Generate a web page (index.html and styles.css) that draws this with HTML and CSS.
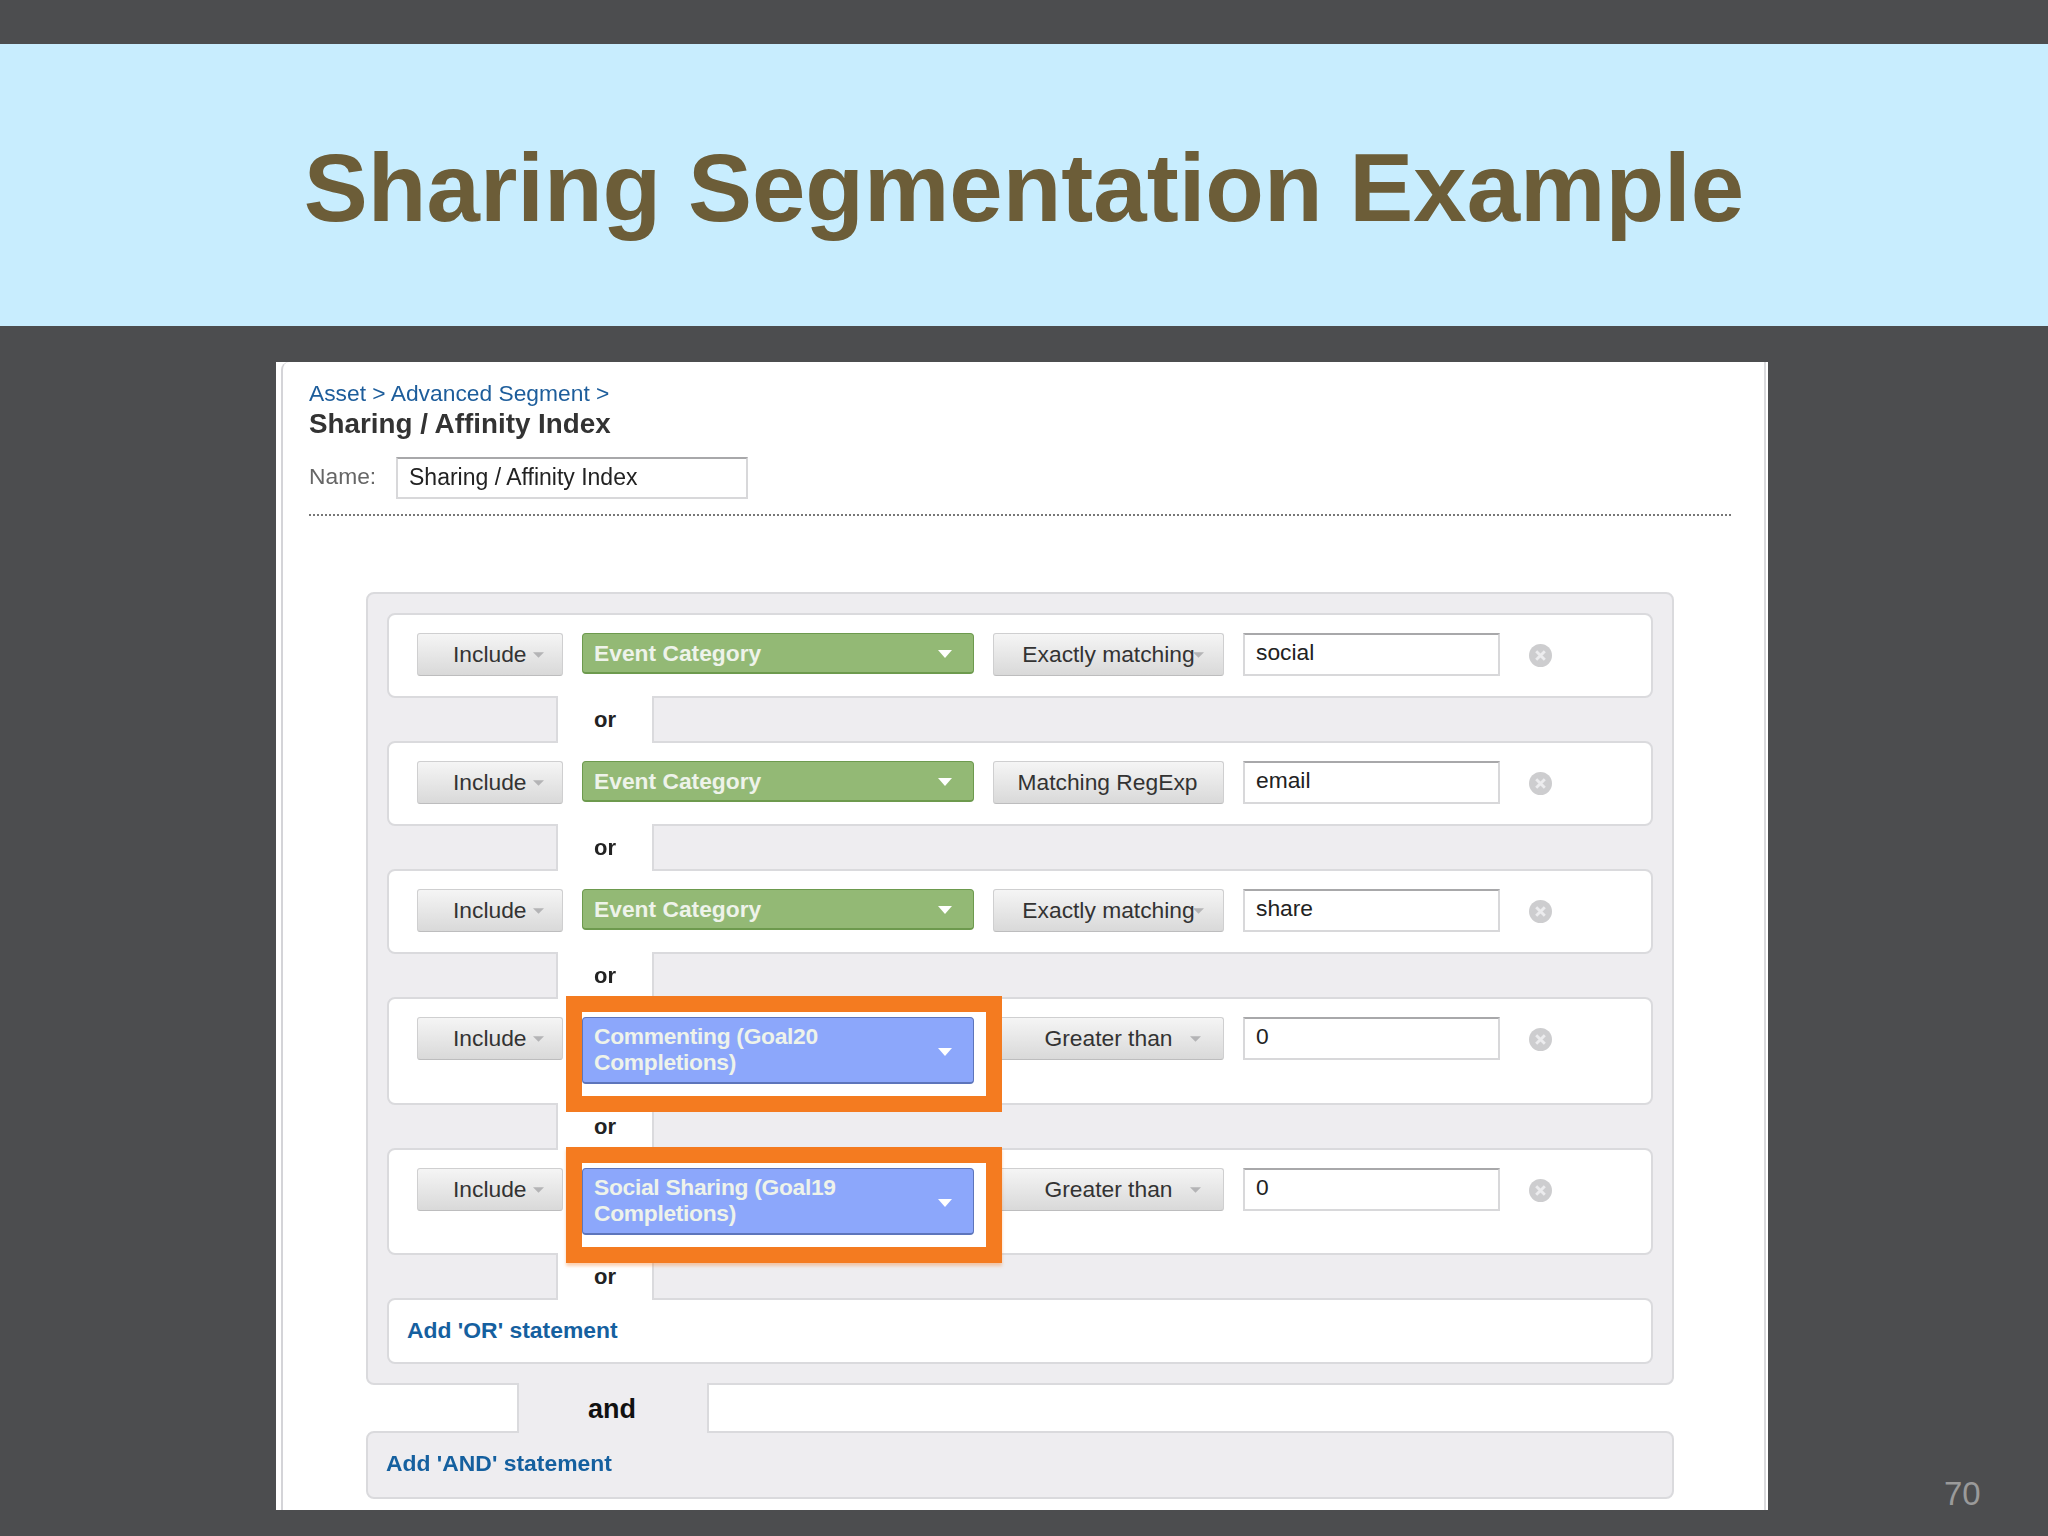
FILE: index.html
```html
<!DOCTYPE html>
<html lang="en">
<head>
<meta charset="utf-8">
<title>Sharing Segmentation Example</title>
<link rel="stylesheet" href="styles.css">
</head>
<body>
<main class="slide">
  <header class="band"><h1 class="slide-title">Sharing Segmentation Example</h1></header>
  <section class="shot">
    <div class="frame">
      <div class="crumbs">Asset &gt; Advanced Segment &gt;</div>
      <h2 class="seg-title">Sharing / Affinity Index</h2>
      <div class="name-row"><span class="name-label">Name:</span><div class="field name-field">Sharing / Affinity Index</div></div>
      <div class="divider"></div>

      <div class="panel">
        <div class="row">
          <div class="btn include">Include<svg class="caret" viewBox="0 0 12 6"><path d="M0 0h12L6 6z"/></svg></div>
          <div class="dim green">Event Category<svg class="dim-caret" viewBox="0 0 14 8"><path d="M0 0h14L7 8z"/></svg></div>
          <div class="btn match exact">Exactly matching<svg class="caret" viewBox="0 0 12 6"><path d="M0 0h12L6 6z"/></svg></div>
          <div class="field val">social</div>
          <svg class="remove" viewBox="0 0 24 24"><circle cx="12" cy="12" r="12"/><path d="M7.5 7.5l9 9M16.5 7.5l-9 9"/></svg>
        </div>
        <div class="link"><div class="tab">or</div></div>
        <div class="row">
          <div class="btn include">Include<svg class="caret" viewBox="0 0 12 6"><path d="M0 0h12L6 6z"/></svg></div>
          <div class="dim green">Event Category<svg class="dim-caret" viewBox="0 0 14 8"><path d="M0 0h14L7 8z"/></svg></div>
          <div class="btn match regexp">Matching RegExp</div>
          <div class="field val">email</div>
          <svg class="remove" viewBox="0 0 24 24"><circle cx="12" cy="12" r="12"/><path d="M7.5 7.5l9 9M16.5 7.5l-9 9"/></svg>
        </div>
        <div class="link"><div class="tab">or</div></div>
        <div class="row">
          <div class="btn include">Include<svg class="caret" viewBox="0 0 12 6"><path d="M0 0h12L6 6z"/></svg></div>
          <div class="dim green">Event Category<svg class="dim-caret" viewBox="0 0 14 8"><path d="M0 0h14L7 8z"/></svg></div>
          <div class="btn match exact">Exactly matching<svg class="caret" viewBox="0 0 12 6"><path d="M0 0h12L6 6z"/></svg></div>
          <div class="field val">share</div>
          <svg class="remove" viewBox="0 0 24 24"><circle cx="12" cy="12" r="12"/><path d="M7.5 7.5l9 9M16.5 7.5l-9 9"/></svg>
        </div>
        <div class="link"><div class="tab">or</div></div>
        <div class="row tall">
          <div class="btn include">Include<svg class="caret" viewBox="0 0 12 6"><path d="M0 0h12L6 6z"/></svg></div>
          <div class="dim blue"><span class="dim-text">Commenting (Goal20<br>Completions)</span><svg class="dim-caret" viewBox="0 0 14 8"><path d="M0 0h14L7 8z"/></svg></div>
          <div class="btn match greater">Greater than<svg class="caret" viewBox="0 0 12 6"><path d="M0 0h12L6 6z"/></svg></div>
          <div class="field val">0</div>
          <svg class="remove" viewBox="0 0 24 24"><circle cx="12" cy="12" r="12"/><path d="M7.5 7.5l9 9M16.5 7.5l-9 9"/></svg>
          <div class="mark"></div>
        </div>
        <div class="link"><div class="tab">or</div></div>
        <div class="row tall">
          <div class="btn include">Include<svg class="caret" viewBox="0 0 12 6"><path d="M0 0h12L6 6z"/></svg></div>
          <div class="dim blue"><span class="dim-text">Social Sharing (Goal19<br>Completions)</span><svg class="dim-caret" viewBox="0 0 14 8"><path d="M0 0h14L7 8z"/></svg></div>
          <div class="btn match greater">Greater than<svg class="caret" viewBox="0 0 12 6"><path d="M0 0h12L6 6z"/></svg></div>
          <div class="field val">0</div>
          <svg class="remove" viewBox="0 0 24 24"><circle cx="12" cy="12" r="12"/><path d="M7.5 7.5l9 9M16.5 7.5l-9 9"/></svg>
          <div class="mark mark-soft"></div>
        </div>
        <div class="link"><div class="tab">or</div></div>
        <div class="row add-or"><span class="add">Add 'OR' statement</span></div>
      </div>

      <div class="and-link"><div class="and-tab">and</div></div>
      <div class="add-and"><span class="add">Add 'AND' statement</span></div>
    </div>
  </section>
  <div class="page-no">70</div>
</main>
</body>
</html>
```

FILE: styles.css
```css
* { box-sizing: border-box; }
html, body { margin: 0; padding: 0; }
body {
  width: 2048px;
  height: 1536px;
  overflow: hidden;
  background: #4c4d4f;
  font-family: "Liberation Sans", Arial, sans-serif;
}
.slide { position: relative; width: 2048px; height: 1536px; padding-top: 44px; }
.band {
  height: 282px;
  background: #c8edfe;
  display: flex;
  align-items: center;
  justify-content: center;
}
.slide-title {
  margin: 0;
  font-size: 96px;
  line-height: 110px;
  font-weight: 700;
  color: #6c5d38;
  padding-top: 6px;
}
.shot {
  width: 1492px;
  height: 1148px;
  margin: 36px 0 0 276px;
  background: #fff;
  overflow: hidden;
}
.frame {
  width: 1485px;
  height: 1160px;
  margin-left: 5px;
  padding: 20px 0 0 26px;
  border-left: 2px solid #d4d4d8;
  border-right: 2px solid #dadadd;
  border-top-left-radius: 8px;
  filter: blur(0.55px);
  color: #333;
  font-size: 22.8px;
}
.crumbs { line-height: 22px; color: #1d5d9b; }
.seg-title {
  margin: 5px 0 0;
  font-size: 27.8px;
  line-height: 30px;
  font-weight: 700;
  color: #333;
}
.name-row { display: flex; align-items: center; gap: 18px; margin-top: 18px; height: 42px; }
.name-label { color: #666; width: 69px; margin-top: -3px; }
.field {
  background: #fff;
  border: 2px solid #d8d8da;
  border-top-color: #a8a8aa;
  color: #222;
}
.name-field { width: 352px; height: 42px; line-height: 36px; padding-left: 11px; font-size: 23px; }
.divider { width: 1422px; margin-top: 15px; border-top: 2px dotted #777; }
.panel {
  width: 1308px;
  margin: 76px 0 0 57px;
  padding: 19px;
  background: #eeedf0;
  border: 2px solid #dadadd;
  border-radius: 8px;
}
.row {
  position: relative;
  display: flex;
  align-items: flex-start;
  gap: 19px;
  height: 85px;
  padding: 18px 0 0 28px;
  background: #fff;
  border: 2px solid #dadadd;
  border-radius: 8px;
}
.row.tall { height: 107.5px; }
.btn {
  display: flex;
  align-items: center;
  position: relative;
  height: 43px;
  background: linear-gradient(#f5f5f5, #d9d9d9);
  border: 1px solid #cfcfd0;
  border-bottom-color: #bdbdbe;
  border-radius: 3px;
  color: #333;
}
.caret { position: absolute; width: 11px; height: 6px; top: 18px; fill: #b4b4b6; }
.include { width: 146px; padding-left: 35px; }
.include .caret { left: 115px; }
.match { width: 231px; justify-content: center; }
.exact { padding-left: 0; }
.exact .caret { left: 199px; }
.regexp { padding-right: 2px; }
.greater { padding-right: 0; }
.greater .caret { left: 196px; }
.dim {
  position: relative;
  width: 392px;
  margin-left: 0;
  height: 41px;
  padding-left: 11px;
  display: flex;
  align-items: center;
  border-radius: 4px;
  font-weight: 700;
  color: #eef3ea;
}
.green { background: #93b975; border: 1px solid #6d9a4e; border-bottom-width: 2px; }
.blue { height: 67px; background: #8ca7fb; border: 1px solid #5d75bb; border-bottom-width: 2px; line-height: 26px; padding-bottom: 2px; }
.dim-text { letter-spacing: -0.3px; }
.dim-caret { position: absolute; right: 21px; width: 14px; height: 8px; top: 16px; fill: #fff; }
.blue .dim-caret { top: 30px; }
.val { width: 257px; height: 43px; padding-left: 11px; line-height: 35px; }
.remove { width: 23px; height: 23px; margin: 11px 0 0 10px; flex: none; }
.remove circle { fill: #cdcdcf; }
.remove path { stroke: #ececee; stroke-width: 3; fill: none; }
.mark {
  position: absolute;
  z-index: 3;
  left: 177px;
  top: -3px;
  width: 436px;
  height: 116px;
  border: 16px solid #f47b20;
}
.mark-soft { box-shadow: 0 3px 3px rgba(244, 123, 32, .35); }
.link { display: flex; height: 43px; padding-left: 169px; }
.tab {
  position: relative;
  z-index: 1;
  width: 98px;
  margin: -2px 0;
  background: #fff;
  border: solid #dadadd;
  border-width: 0 2px;
  padding-left: 36px;
  font-weight: 700;
  font-size: 22px;
  line-height: 48px;
  color: #222;
}
.add-or { height: 66px; padding: 0 0 2px 18px; align-items: center; }
.add { font-weight: 700; font-size: 22.9px; color: #15609f; }
.and-link { display: flex; width: 1308px; height: 46px; margin-left: 57px; padding-left: 151px; }
.and-tab {
  position: relative;
  z-index: 1;
  width: 192px;
  margin: -2px 0;
  background: #eeedf0;
  border: solid #dadadd;
  border-width: 0 2px;
  padding-left: 69px;
  font-weight: 700;
  font-size: 27px;
  line-height: 52px;
  color: #111;
}
.add-and {
  display: flex;
  align-items: center;
  width: 1308px;
  height: 68px;
  margin-left: 57px;
  padding: 0 0 3px 18px;
  background: #eeedf0;
  border: 2px solid #dadadd;
  border-radius: 8px;
}
.page-no {
  position: absolute;
  left: 1944px;
  top: 1476px;
  font-size: 33px;
  line-height: 36px;
  color: #9a9a9a;
}
```
